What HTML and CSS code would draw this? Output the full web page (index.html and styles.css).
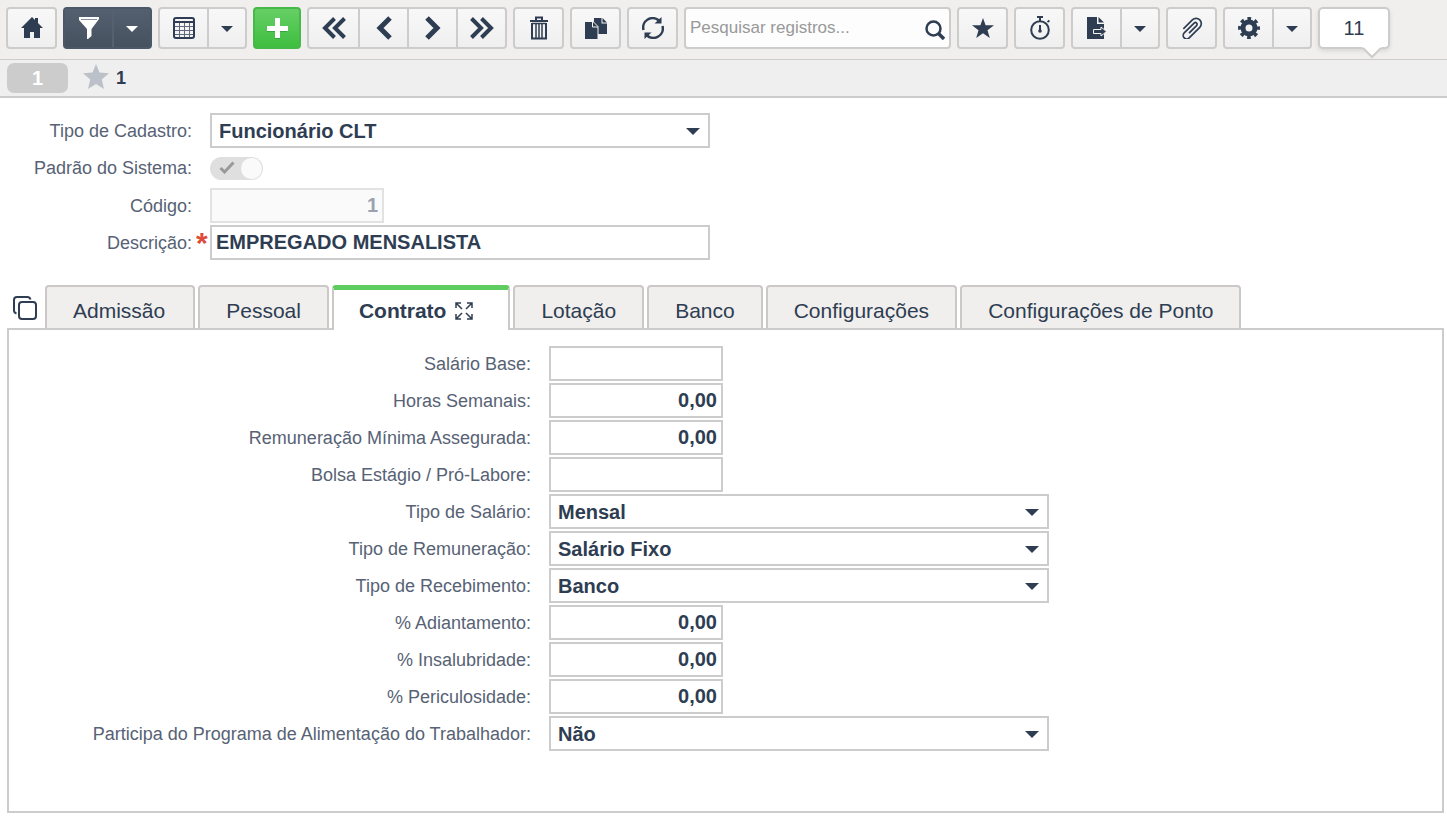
FILE: index.html
```html
<!DOCTYPE html>
<html lang="pt-BR">
<head>
    <meta charset="UTF-8">
    <meta name="viewport" content="width=device-width, initial-scale=1.0">
    <title>Funcionário CLT</title>
    <link rel="stylesheet" href="styles.css">
</head>
<body>
    <!-- Barra de ferramentas -->
    <div class="toolbar">
        <div class="btn-group">
            <button type="button" class="btn" aria-label="Início">
                <svg width="22" height="22" viewBox="0 0 22 22"><path fill="currentColor" d="M11 0L0 11h3v10h6v-6h4v6h6V11h3l-5-5V1h-3v2z"/></svg>
            </button>
        </div>
        <div class="btn-group dark">
            <button type="button" class="btn" aria-label="Filtrar">
                <svg width="20" height="22" viewBox="0 0 20 22"><path fill="currentColor" d="M0 0h20v2l-7.500 10v7L9 22h-1V12L0 3z"/><path stroke="#8a929e" d="M2 2.500h16"/></svg>
            </button>
            <button type="button" class="btn btn-arrow" aria-label="Opções de filtro"><span class="caret"></span></button>
        </div>
        <div class="btn-group">
            <button type="button" class="btn" aria-label="Grade">
                <svg width="22" height="22" viewBox="0 0 22 22" fill="none" stroke="currentColor"><rect x="1" y="1" width="20" height="20" rx="2" stroke-width="2"/><path stroke-width="2" d="M1 5h20"/><path stroke="#5d697a" d="M2 9.500h18M2 13.500h18M2 17.500h18M6.500 6v14M11.500 6v14M16.500 6v14"/></svg>
            </button>
            <button type="button" class="btn btn-arrow" aria-label="Opções da grade"><span class="caret"></span></button>
        </div>
        <div class="btn-group add">
            <button type="button" class="btn" aria-label="Novo">
                <svg width="22" height="22" viewBox="0 0 22 22"><path fill="#36a53a" d="M9 19h5v3H9zM1 12h20v3H1z"/><path stroke="currentColor" stroke-width="5" d="M11.500 1v20M1 11.500h21"/></svg>
            </button>
        </div>
        <div class="btn-group nav">
            <button type="button" class="btn" aria-label="Primeiro">
                <svg width="24" height="22" viewBox="0 0 24 22" fill="none" stroke="currentColor" stroke-width="4"><path d="M12.500 1.500L3 11l9.500 9.500M22.500 1.500L13 11l9.500 9.500"/></svg>
            </button>
            <button type="button" class="btn" aria-label="Anterior">
                <svg width="16" height="24" viewBox="0 0 16 24" fill="none" stroke="currentColor" stroke-width="5"><path d="M14 2L4 12l10 10"/></svg>
            </button>
            <button type="button" class="btn" aria-label="Próximo">
                <svg width="16" height="24" viewBox="0 0 16 24" fill="none" stroke="currentColor" stroke-width="5"><path d="M2 2l10 10L2 22"/></svg>
            </button>
            <button type="button" class="btn" aria-label="Último">
                <svg width="24" height="22" viewBox="0 0 24 22" fill="none" stroke="currentColor" stroke-width="4"><path d="M1.500 1.500L11 11l-9.500 9.500M11.500 1.500L21 11l-9.500 9.500"/></svg>
            </button>
        </div>
        <div class="btn-group">
            <button type="button" class="btn" aria-label="Excluir">
                <svg width="18" height="24" viewBox="0 0 18 24" fill="none" stroke="currentColor"><path stroke-width="2" d="M0 5h18M6 4V1.500h6V4M2 7v15.500h14V7"/><path stroke-width="1.500" d="M2 7.500h14M6 7v15M9 7v15M12 7v15"/></svg>
            </button>
        </div>
        <div class="btn-group">
            <button type="button" class="btn" aria-label="Duplicar">
                <svg width="22" height="21" viewBox="0 0 22 21"><path fill="currentColor" d="M9 0h7.500v5.500H22V16H9z"/><path fill="currentColor" d="M17.500 0L22 4.500h-4.500z"/><path fill="currentColor" stroke="#f4f4f4" d="M-.5 3.500h8.500l5 5v13H-.5z"/><path fill="none" stroke="#f4f4f4" d="M7.500 4v5H13"/></svg>
            </button>
        </div>
        <div class="btn-group">
            <button type="button" class="btn" aria-label="Atualizar">
                <svg width="22" height="22" viewBox="0 0 22 22"><path fill="none" stroke="currentColor" stroke-width="2.500" d="M1.500 13A9.500 9.500 0 0 1 17 3.500M20.500 9A9.500 9.500 0 0 1 5 18.500"/><path fill="currentColor" d="M19.500 0v6.500h-7zM2.500 22v-6.500h7z"/></svg>
            </button>
        </div>
        <div class="search">
            <input type="search" placeholder="Pesquisar registros..." aria-label="Pesquisar registros">
            <button type="button" class="search-btn" aria-label="Pesquisar">
                <svg width="20" height="20" viewBox="0 0 20 20" fill="none" stroke="currentColor"><circle cx="8.500" cy="8.500" r="7" stroke-width="2.500"/><path stroke-width="3.500" d="M13.500 13.500l5.500 5.500"/></svg>
            </button>
        </div>
        <div class="btn-group">
            <button type="button" class="btn" aria-label="Favoritos">
                <svg width="22" height="20" viewBox="0 0 22 20"><path fill="currentColor" d="M11 0l2.600 7.300H22l-6.500 5 2.300 7.700-6.800-4.700L4.200 20l2.300-7.700L0 7.300h8.400z"/></svg>
            </button>
        </div>
        <div class="btn-group">
            <button type="button" class="btn" aria-label="Temporizador">
                <svg width="20" height="24" viewBox="0 0 20 24"><g fill="none" stroke="currentColor" stroke-width="2"><circle cx="10" cy="14" r="8.800"/><path d="M7 1h6M10 1v4M10 9v7M17.500 6l2-1.500"/></g><circle cx="10" cy="15" r="1.800" fill="currentColor"/></svg>
            </button>
        </div>
        <div class="btn-group">
            <button type="button" class="btn" aria-label="Exportar">
                <svg width="20" height="22" viewBox="0 0 20 22"><path fill="currentColor" d="M0 0h10v7h7v15H0zM11.500 0L17 5.500h-5.500z"/><path fill="currentColor" stroke="#f4f4f4" d="M6.500 12.500H14V10l5.500 4.500L14 19v-2.500H6.500z"/></svg>
            </button>
            <button type="button" class="btn btn-arrow" aria-label="Opções de exportação"><span class="caret"></span></button>
        </div>
        <div class="btn-group">
            <button type="button" class="btn" aria-label="Anexos">
                <svg width="24" height="22" viewBox="0 0 24 22" fill="none" stroke="currentColor" stroke-width="1.700" stroke-linecap="round"><path transform="rotate(-45 12 11)" d="M7 12.500H17a1.750 1.750 0 0 0 0-3.500H3a3.500 3.500 0 0 0 0 7H18a5.250 5.250 0 0 0 0-10.500H6"/></svg>
            </button>
        </div>
        <div class="btn-group">
            <button type="button" class="btn" aria-label="Configurações">
                <svg width="22" height="22" viewBox="0 0 22 22" fill="none" stroke="currentColor"><circle cx="11" cy="11" r="6" stroke-width="5"/><circle cx="11" cy="11" r="9.200" stroke-width="3.500" stroke-dasharray="3.610 3.610" stroke-dashoffset="1.800"/></svg>
            </button>
            <button type="button" class="btn btn-arrow" aria-label="Opções de configuração"><span class="caret"></span></button>
        </div>
        <div class="counter">11
            <svg class="counter-tail" width="20" height="12" viewBox="0 0 20 12"><path fill="#fff" d="M0 0h20L10 10z"/><path fill="none" stroke="#ccc" stroke-width="2" d="M1 1l9 9 9-9"/></svg>
        </div>
    </div>

    <!-- Registro atual -->
    <div class="record-bar">
        <span class="record-pill">1</span>
        <svg class="record-star" width="26" height="25" viewBox="0 0 26 25"><path fill="currentColor" d="M13 0l3.500 8.500 9.500.8-7.200 6.200L21 25l-8-5-8 5 2.200-9.500L0 9.300l9.500-.8z"/></svg>
        <span class="record-count">1</span>
    </div>

    <main class="content">
        <form class="form">
            <div class="row">
                <label for="tipo-cadastro">Tipo de Cadastro:</label>
                <span class="mark"></span>
                <div class="select"><select id="tipo-cadastro"><option>Funcionário CLT</option></select></div>
            </div>
            <div class="row row-toggle">
                <label for="padrao">Padrão do Sistema:</label>
                <span class="mark"></span>
                <div class="toggle">
                    <input type="checkbox" id="padrao" checked disabled>
                    <svg width="16" height="13" viewBox="0 0 16 13"><path fill="none" stroke="#999" stroke-width="3" d="M1.500 7l4 4 9-9.500"/></svg>
                </div>
            </div>
            <div class="row">
                <label for="codigo">Código:</label>
                <span class="mark"></span>
                <input type="text" class="number" id="codigo" value="1" disabled>
            </div>
            <div class="row">
                <label for="descricao">Descrição:</label>
                <span class="mark">*</span>
                <input type="text" id="descricao" value="EMPREGADO MENSALISTA" required>
            </div>
        </form>

        <!-- Abas -->
        <div class="tabs" role="tablist">
            <button type="button" class="tabs-copy" aria-label="Exibir todas as abas">
                <svg width="24" height="24" viewBox="0 0 24 24" fill="none" stroke="currentColor" stroke-width="2"><rect x="6" y="6" width="17" height="17" rx="3"/><path d="M3.500 17.500C2 17 1 16 1 14.500V4c0-2 1-3 3-3h10.500c1.500 0 2.500 1 3 2.500"/></svg>
            </button>
            <button type="button" class="tab" role="tab">Admissão</button>
            <button type="button" class="tab" role="tab">Pessoal</button>
            <button type="button" class="tab active" role="tab" aria-selected="true">Contrato
                <svg width="18" height="18" viewBox="0 0 18 18" fill="none" stroke="currentColor" stroke-width="1.500"><path d="M1 6V1h5M12 1h5v5M17 12v5h-5M6 17H1v-5M1 1l6 6M17 1l-6 6M17 17l-6-6M1 17l6-6"/></svg>
            </button>
            <button type="button" class="tab" role="tab">Lotação</button>
            <button type="button" class="tab" role="tab">Banco</button>
            <button type="button" class="tab" role="tab">Configurações</button>
            <button type="button" class="tab" role="tab">Configurações de Ponto</button>
        </div>

        <form class="form panel">
            <div class="row">
                <label for="salario-base">Salário Base:</label>
                <span class="mark"></span>
                <input type="text" class="number" id="salario-base">
            </div>
            <div class="row">
                <label for="horas">Horas Semanais:</label>
                <span class="mark"></span>
                <input type="text" class="number" id="horas" value="0,00">
            </div>
            <div class="row">
                <label for="remuneracao-minima">Remuneração Mínima Assegurada:</label>
                <span class="mark"></span>
                <input type="text" class="number" id="remuneracao-minima" value="0,00">
            </div>
            <div class="row">
                <label for="bolsa">Bolsa Estágio / Pró-Labore:</label>
                <span class="mark"></span>
                <input type="text" class="number" id="bolsa">
            </div>
            <div class="row">
                <label for="tipo-salario">Tipo de Salário:</label>
                <span class="mark"></span>
                <div class="select"><select id="tipo-salario"><option>Mensal</option></select></div>
            </div>
            <div class="row">
                <label for="tipo-remuneracao">Tipo de Remuneração:</label>
                <span class="mark"></span>
                <div class="select"><select id="tipo-remuneracao"><option>Salário Fixo</option></select></div>
            </div>
            <div class="row">
                <label for="tipo-recebimento">Tipo de Recebimento:</label>
                <span class="mark"></span>
                <div class="select"><select id="tipo-recebimento"><option>Banco</option></select></div>
            </div>
            <div class="row">
                <label for="adiantamento">% Adiantamento:</label>
                <span class="mark"></span>
                <input type="text" class="number" id="adiantamento" value="0,00">
            </div>
            <div class="row">
                <label for="insalubridade">% Insalubridade:</label>
                <span class="mark"></span>
                <input type="text" class="number" id="insalubridade" value="0,00">
            </div>
            <div class="row">
                <label for="periculosidade">% Periculosidade:</label>
                <span class="mark"></span>
                <input type="text" class="number" id="periculosidade" value="0,00">
            </div>
            <div class="row">
                <label for="pat">Participa do Programa de Alimentação do Trabalhador:</label>
                <span class="mark"></span>
                <div class="select"><select id="pat"><option>Não</option></select></div>
            </div>
        </form>
    </main>
</body>
</html>
```

FILE: styles.css
```css
* {
    box-sizing: border-box;
    font-family: "Liberation Sans", Arial, Helvetica, sans-serif;
}

body {
    margin: 0;
    min-height: 100vh;
    display: flex;
    flex-direction: column;
    background: #fff;
    color: #2e3d52;
}

button {
    padding: 0;
    border: 0;
    background: none;
    color: inherit;
    cursor: pointer;
}

svg {
    display: block;
    flex: none;
}

/* Barra de ferramentas */
.toolbar {
    display: flex;
    gap: 6px;
    height: 60px;
    padding: 7px 6px 0;
    background: #f0efed;
    border-bottom: 1px solid #ccc;
}

.btn-group {
    display: flex;
    flex: none;
    height: 42px;
    border: 2px solid #ccc;
    border-radius: 4px;
    background: linear-gradient(#f8f8f8, #efefef);
}

.btn {
    display: flex;
    align-items: center;
    justify-content: center;
    width: 47px;
}

.btn + .btn {
    border-left: 2px solid #ccc;
}

.btn-arrow {
    width: 38px;
}

.nav .btn {
    width: 49px;
}

.caret {
    margin-top: 2px;
    border: 6px solid transparent;
    border-top-color: currentColor;
    border-bottom: 0;
}

.dark {
    border-color: #4c5868;
    background: linear-gradient(#546070, #46515f);
    color: #fff;
}

.dark .btn + .btn {
    border-left-color: #56616f;
}

.add {
    border-color: #47b84a;
    background: linear-gradient(#66cf66, #3fbe3f);
    color: #fff;
}

.add .btn {
    width: 44px;
}

.search {
    display: flex;
    align-items: center;
    flex: 0 1 267px;
    height: 42px;
    border: 2px solid #ccc;
    border-radius: 4px;
    background: #fdfdfd;
}

.search input {
    flex: 1;
    min-width: 0;
    height: 34px;
    padding: 0 4px;
    border: 0;
    outline: 0;
    background: none;
    font-size: 17px;
}

.search input::placeholder {
    color: #999;
}

.search-btn {
    padding: 4px 4px 0;
}

.counter {
    position: relative;
    flex: none;
    width: 72px;
    height: 42px;
    border: 2px solid #ccc;
    border-radius: 5px;
    background: #fff;
    box-shadow: 0 2px 4px rgba(0, 0, 0, 0.1);
    font-size: 20px;
    line-height: 38px;
    text-align: center;
}

.counter-tail {
    position: absolute;
    right: 6px;
    top: 38px;
}

/* Registro atual */
.record-bar {
    display: flex;
    align-items: center;
    height: 38px;
    padding: 0 7px;
    background: #efefef;
    border-bottom: 2px solid #ccc;
    font-weight: bold;
}

.record-pill {
    width: 61px;
    height: 30px;
    border-radius: 7px;
    background: #ccc;
    color: #fff;
    font-size: 20px;
    line-height: 30px;
    text-align: center;
}

.record-star {
    margin: 0 7px 4px 15px;
    color: #bcc0c8;
}

.record-count {
    font-size: 18px;
}

/* Formulários */
.content {
    flex: 1;
    display: flex;
    flex-direction: column;
    padding: 15px 3px 4px 7px;
}

.form {
    display: flex;
    flex-direction: column;
    gap: 2px;
}

.row {
    display: flex;
    align-items: center;
    min-height: 35px;
}

.row-toggle {
    min-height: 36px;
}

.row label {
    flex: none;
    width: 185px;
    padding-top: 1px;
    color: #576275;
    font-size: 18px;
    text-align: right;
}

.mark {
    flex: none;
    width: 18px;
    height: 24px;
    padding-left: 4px;
    color: #dd4b39;
    font-size: 30px;
    font-weight: bold;
    line-height: 24px;
}

.row input[type="text"],
.select select {
    width: 500px;
    height: 35px;
    border: 2px solid #ccc;
    border-radius: 0;
    background: #fff;
    color: #2e3d52;
    font-size: 20px;
    font-weight: bold;
}

.row input[type="text"] {
    padding: 0 4px;
}

.row input.number {
    width: 174px;
    text-align: right;
}

.row input[type="text"]:disabled {
    border-color: #e2e2e2;
    background: #fafafa;
    color: #9aa2af;
}

.select {
    position: relative;
}

.select select {
    display: block;
    padding: 0 30px 0 7px;
    appearance: none;
}

.select::after {
    content: '';
    position: absolute;
    top: 15px;
    right: 10px;
    border: 7px solid transparent;
    border-top-color: #2e3d52;
    border-bottom: 0;
    pointer-events: none;
}

.toggle {
    position: relative;
}

.toggle input {
    display: flex;
    justify-content: flex-end;
    width: 53px;
    height: 23px;
    margin: 0;
    padding: 1px;
    border-radius: 12px;
    background: #dfdfdf;
    appearance: none;
}

.toggle input::after {
    content: '';
    width: 21px;
    height: 21px;
    border-radius: 50%;
    background: #fafafa;
}

.toggle svg {
    position: absolute;
    left: 9px;
    top: 4px;
}

/* Abas */
.tabs {
    display: flex;
    align-items: flex-end;
    gap: 3px;
    margin-top: 25px;
}

.tabs-copy {
    display: flex;
    align-items: center;
    width: 35px;
    height: 43px;
    padding: 2px 0 0 6px;
}

.tab {
    display: flex;
    align-items: center;
    height: 43px;
    padding: 6px 26px 0;
    border: 2px solid #cdc8c8;
    border-bottom: 0;
    border-radius: 4px 4px 0 0;
    background: #f0efed;
    font-size: 21px;
    white-space: nowrap;
}

.tabs-copy + .tab {
    padding-right: 28px;
}

.tab.active {
    position: relative;
    gap: 9px;
    height: 45px;
    margin-bottom: -2px;
    padding: 2px 35px 0 25px;
    border-top: 5px solid #5fcc5f;
    background: #fff;
    font-weight: bold;
}

.panel {
    flex: 1;
    padding: 16px 0;
    border: 2px solid #ccc;
}

.panel .row label {
    width: 522px;
}
```
